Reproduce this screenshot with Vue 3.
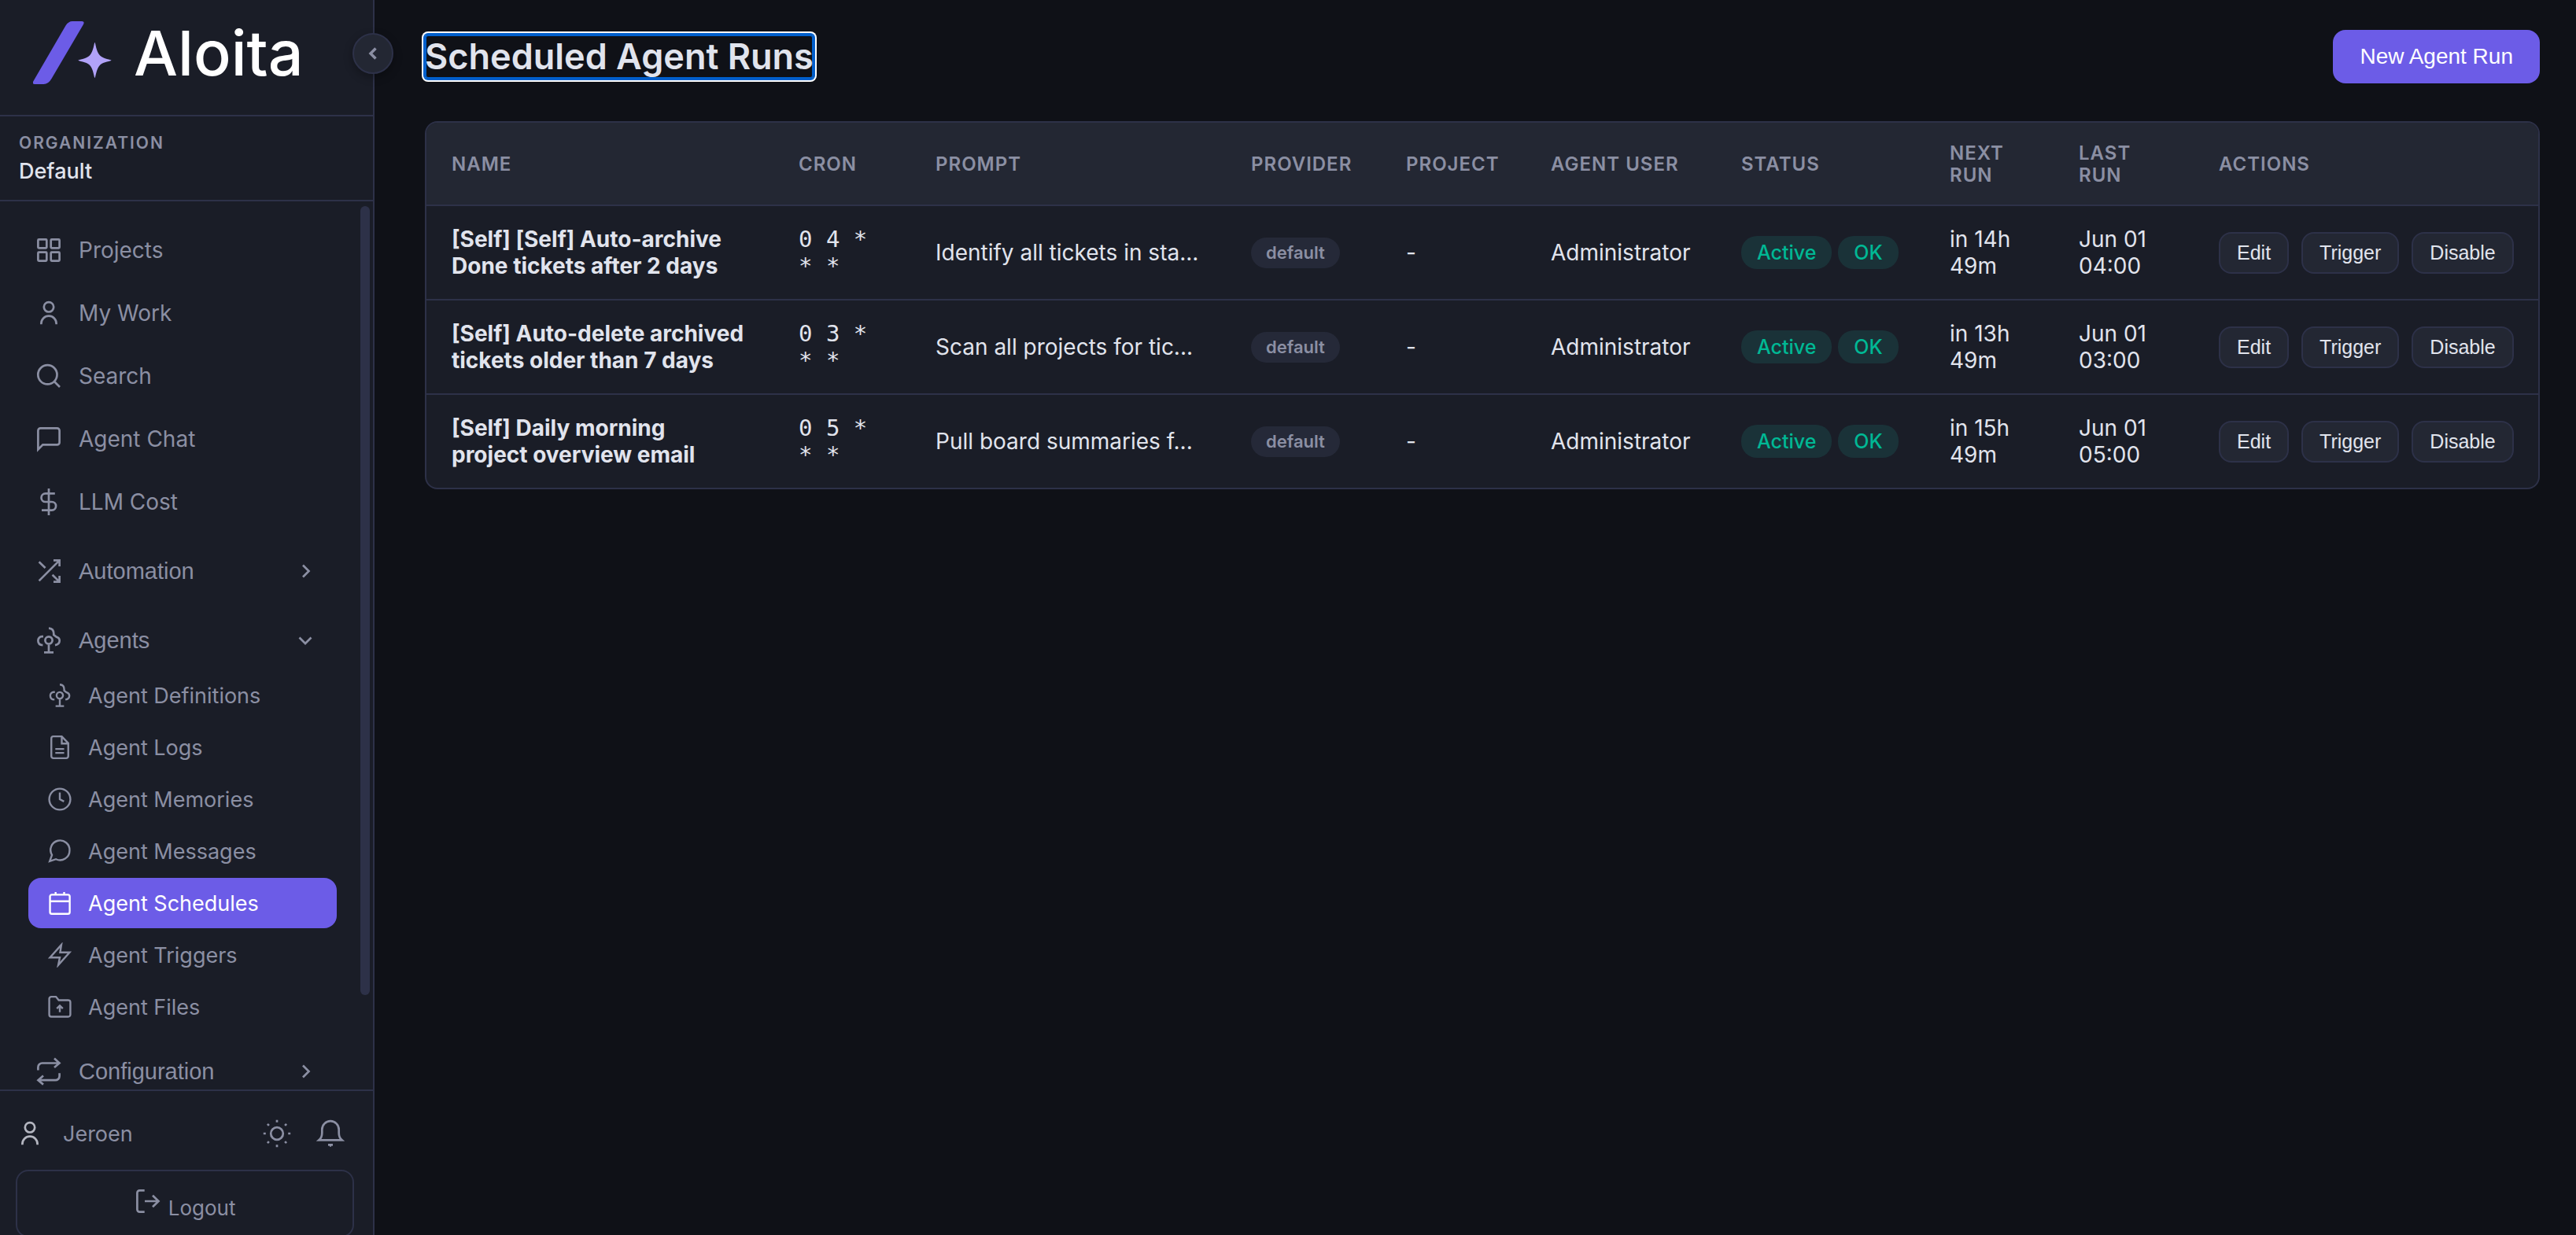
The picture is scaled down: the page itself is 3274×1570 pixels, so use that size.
<template>
  <div class="layout">
    <aside class="sidebar">
      <div class="brand">
        <svg class="brand-mark" viewBox="0 0 100 80" aria-hidden="true">
          <path
            d="M50 0h12q4 0 2 4L23.500 73q-4 7-10 7H2q-3.500 0-1.500-4L41.500 5.500Q45 0 50 0z"
            fill="#6c5ce7"
          />
          <path
            d="M78.500 27c1 0 1.500 11.500 6.500 16.500 4.500 4.500 14.500 5.200 14.500 6.200s-10 1.500-14.500 6C80 61 79.500 72 78.500 72s-1.500-11-6.500-16.300c-4.500-4.500-14.500-5-14.500-6s10-1.700 14.500-6.200C77 38.500 77.500 27 78.500 27z"
            fill="#b1a2f8"
          />
        </svg>
        <span class="brand-name">Aloita</span>
      </div>
      <button class="collapse-btn" aria-label="Collapse sidebar">
        <svg viewBox="0 0 16 20"><path d="M11.5 3.5 5 10l6.5 6.5" /></svg>
      </button>

      <div class="org">
        <span class="org-label">Organization</span>
        <span class="org-name">Default</span>
      </div>

      <div class="nav-wrap">
        <nav class="nav">
          <a v-for="item in mainItems" :key="item.label" href="#" class="nav-item">
            <svg class="icon" viewBox="0 0 36 36"><path :d="icons[item.icon]" /></svg>
            {{ item.label }}
          </a>

          <template v-for="group in groups" :key="group.label">
            <button class="nav-item nav-group" :aria-expanded="group.open">
              <svg class="icon" viewBox="0 0 36 36"><path :d="icons[group.icon]" /></svg>
              <span>{{ group.label }}</span>
              <svg class="chevron" viewBox="0 0 24 24">
                <path :d="group.open ? icons.chevronDown : icons.chevronRight" />
              </svg>
            </button>
            <div v-if="group.open" class="sub-list">
              <a
                v-for="item in group.items"
                :key="item.label"
                href="#"
                class="sub-item"
                :class="{ active: item.label === current }"
              >
                <svg class="icon icon-small" viewBox="0 0 36 36"><path :d="icons[item.icon]" /></svg>
                {{ item.label }}
              </a>
            </div>
          </template>
        </nav>
        <div class="scroll-thumb"></div>
      </div>

      <div class="sidebar-footer">
        <div class="user-row">
          <svg class="icon user-icon" viewBox="0 0 36 36"><path :d="icons.user" /></svg>
          <span class="user-name">Jeroen</span>
          <button class="icon-btn" aria-label="Toggle theme">
            <svg class="icon" viewBox="0 0 36 36"><path :d="icons.sun" /></svg>
          </button>
          <button class="icon-btn" aria-label="Notifications">
            <svg class="icon" viewBox="0 0 36 36"><path :d="icons.bell" /></svg>
          </button>
        </div>
        <button class="logout-btn">
          <svg class="icon" viewBox="0 0 36 36"><path :d="icons.logout" /></svg>
          Logout
        </button>
      </div>
    </aside>

    <main class="main">
      <header class="page-header">
        <h1 tabindex="-1">Scheduled Agent Runs</h1>
        <button class="btn-primary">New Agent Run</button>
      </header>

      <div class="table-card">
        <table>
          <colgroup>
            <col class="col-name" />
            <col class="col-cron" />
            <col class="col-prompt" />
            <col class="col-provider" />
            <col class="col-project" />
            <col class="col-user" />
            <col class="col-status" />
            <col class="col-next" />
            <col class="col-last" />
            <col class="col-actions" />
          </colgroup>
          <thead>
            <tr>
              <th v-for="column in columns" :key="column">{{ column }}</th>
            </tr>
          </thead>
          <tbody>
            <tr v-for="run in runs" :key="run.name">
              <td class="name">{{ run.name }}</td>
              <td class="cron">{{ run.cron }}</td>
              <td class="prompt">{{ run.prompt }}</td>
              <td><span class="badge badge-muted">default</span></td>
              <td>-</td>
              <td>Administrator</td>
              <td>
                <div class="badges">
                  <span class="badge badge-success">Active</span>
                  <span class="badge badge-success">OK</span>
                </div>
              </td>
              <td>{{ run.next }}</td>
              <td>{{ run.last }}</td>
              <td>
                <div class="actions">
                  <button class="btn-small">Edit</button>
                  <button class="btn-small">Trigger</button>
                  <button class="btn-small">Disable</button>
                </div>
              </td>
            </tr>
          </tbody>
        </table>
      </div>
    </main>
  </div>
</template>

<script setup>
import { ref } from 'vue';

const current = ref('Agent Schedules');

const icons = {
  grid: 'M5.4 4.4h8.9a1 1 0 0 1 1 1v8.9a1 1 0 0 1-1 1H5.4a1 1 0 0 1-1-1V5.4a1 1 0 0 1 1-1zM21.7 4.4h8.9a1 1 0 0 1 1 1v8.9a1 1 0 0 1-1 1h-8.9a1 1 0 0 1-1-1V5.4a1 1 0 0 1 1-1zM5.4 20.7h8.9a1 1 0 0 1 1 1v8.9a1 1 0 0 1-1 1H5.4a1 1 0 0 1-1-1v-8.9a1 1 0 0 1 1-1zM21.7 20.7h8.9a1 1 0 0 1 1 1v8.9a1 1 0 0 1-1 1h-8.9a1 1 0 0 1-1-1v-8.9a1 1 0 0 1 1-1z',
  user: 'M11.8 10.3a6.2 6.2 0 1 0 12.4 0a6.2 6.2 0 1 0-12.4 0M8.4 32.2v-1a9.6 9.5 0 0 1 19.2 0v1',
  search: 'M4.3 16.3a12.1 12.1 0 1 0 24.2 0a12.1 12.1 0 1 0-24.2 0M25 25l7 7',
  chat: 'M4.4 31.5V7.4a3 3 0 0 1 3-3h21.2a3 3 0 0 1 3 3v15a3 3 0 0 1-3 3H10.4z',
  dollar: 'M18 1v34M25.8 7.4H13.8a5.3 5.3 0 0 0 0 10.6h8a5.3 5.3 0 0 1 0 10.6H9',
  shuffle: 'M24 4.4h7.6V12M31.6 4.4 5.6 30.4M5.6 6.2l8 7.8M22.6 22.8l9 8.8M31.6 24v7.6H24',
  agents: 'M13.4 18a4.6 4.6 0 1 0 9.2 0a4.6 4.6 0 1 0-9.2 0M18 22.6v10.5M12 33.3h12M11 13.2H9.5a5 5 0 0 0-5.1 5.3c0 3.4 2.3 5.5 6 5.6M18 2.6c4 .2 6.3 3 6.3 7v1.5l3.2 2.5c2.8.8 4.2 2.6 4.2 4.9 0 3-2.2 5-5.7 5.6',
  file: 'M20.8 2.4H8.9a3 3 0 0 0-3 3v25.2a3 3 0 0 0 3 3h18.2a3 3 0 0 0 3-3V12.2zM20.8 2.4v10.2h9.3M11.6 20.4h12.6M11.6 26h12.6',
  clock: 'M2.9 18a15.1 15.1 0 1 0 30.2 0a15.1 15.1 0 1 0-30.2 0M18 8.5V18l6 3.2',
  message: 'M32 17.2a13.6 13.6 0 0 1-19.5 12.3L3.6 32.4 6.8 23.4A13.6 13.6 0 1 1 32 17.2z',
  calendar: 'M6.6 6h23a2.6 2.6 0 0 1 2.6 2.6v22.2a2.6 2.6 0 0 1-2.6 2.6h-23A2.6 2.6 0 0 1 4 30.8V8.6A2.6 2.6 0 0 1 6.6 6zM12 2.2V6M24.2 2.2V6M4 15.4h28.2',
  bolt: 'M20.2 3.5 4 21.6h14L15.8 32.5 32 14.4H18.5z',
  folder: 'M2.9 6.5a3 3 0 0 1 3-3h6.6l4 5h13.6a3 3 0 0 1 3 3v17.6a3 3 0 0 1-3 3H5.9a3 3 0 0 1-3-3zM18 25.5v-9M13.7 20.5l4.3-4.3 4.3 4.3',
  repeat: 'M25 1.6l6.5 5.9-6.5 5.5M31 7.5H9.6a5.2 5.2 0 0 0-5.2 5.2V16.5M11 23.4 4.5 29.2l6.5 5.4M5 29.2h21.4a5.2 5.2 0 0 0 5.2-5.2V20.2',
  sun: 'M10.2 18a7.8 7.8 0 1 0 15.6 0a7.8 7.8 0 1 0-15.6 0M18 .8v3M18 32.2v3M.8 18h3M32.2 18h3M5.9 5.9l2 2M28.1 28.1l2 2M5.9 30.1l2-2M28.1 7.9l2-2',
  bell: 'M3.4 26.4h29.2c-2.6-2.2-3.9-5-3.9-9.2v-4.3a10.7 10.7 0 0 0-21.4 0v4.3c0 4.2-1.3 7-3.9 9.2zM15 32.3h6M17 33.5h2',
  logout: 'M13.7 4.4H7.4a3 3 0 0 0-3 3v21.2a3 3 0 0 0 3 3h6.3M14 18h17.5M24 10.8l7.5 7.2-7.5 7.2',
  chevronRight: 'M9 4.5l7.5 7.5L9 19.5',
  chevronDown: 'M4.5 8.5l7.5 7.5 7.5-7.5'
};

const mainItems = [
  { label: 'Projects', icon: 'grid' },
  { label: 'My Work', icon: 'user' },
  { label: 'Search', icon: 'search' },
  { label: 'Agent Chat', icon: 'chat' },
  { label: 'LLM Cost', icon: 'dollar' }
];

const groups = [
  { label: 'Automation', icon: 'shuffle', open: false },
  {
    label: 'Agents',
    icon: 'agents',
    open: true,
    items: [
      { label: 'Agent Definitions', icon: 'agents' },
      { label: 'Agent Logs', icon: 'file' },
      { label: 'Agent Memories', icon: 'clock' },
      { label: 'Agent Messages', icon: 'message' },
      { label: 'Agent Schedules', icon: 'calendar' },
      { label: 'Agent Triggers', icon: 'bolt' },
      { label: 'Agent Files', icon: 'folder' }
    ]
  },
  { label: 'Configuration', icon: 'repeat', open: false }
];

const columns = [
  'Name', 'Cron', 'Prompt', 'Provider', 'Project',
  'Agent User', 'Status', 'Next Run', 'Last Run', 'Actions'
];

const runs = [
  {
    name: '[Self] [Self] Auto-archive Done tickets after 2 days',
    cron: '0 4 * * *',
    prompt: 'Identify all tickets in sta...',
    next: 'in 14h 49m',
    last: 'Jun 01 04:00'
  },
  {
    name: '[Self] Auto-delete archived tickets older than 7 days',
    cron: '0 3 * * *',
    prompt: 'Scan all projects for tic...',
    next: 'in 13h 49m',
    last: 'Jun 01 03:00'
  },
  {
    name: '[Self] Daily morning project overview email',
    cron: '0 5 * * *',
    prompt: 'Pull board summaries f...',
    next: 'in 15h 49m',
    last: 'Jun 01 05:00'
  }
];
</script>

<style>
body {
  margin: 0;
  background-color: #0f1117;
}
</style>

<style scoped>
.layout {
  display: flex;
  height: 100vh;
  overflow: hidden;
  background-color: #0f1117;
  color: #e1e4ed;
  font-family: Inter, "Liberation Sans", sans-serif;
  font-size: 28px;
}

.layout *,
.layout {
  box-sizing: border-box;
}

button {
  font-family: "Liberation Sans", Arial, sans-serif;
  cursor: pointer;
}

svg {
  flex-shrink: 0;
  fill: none;
  stroke: currentColor;
  stroke-width: 2.7;
}

/* Sidebar */
.sidebar {
  position: relative;
  display: flex;
  flex-direction: column;
  flex-shrink: 0;
  width: 476px;
  background-color: #1a1d27;
  border-right: 2px solid #2d3148;
  color: #8b8fa3;
}

.brand {
  display: flex;
  align-items: center;
  gap: 28px;
  height: 148px;
  padding: 0 42px 12px;
  border-bottom: 2px solid #2d3148;
}

.brand-mark {
  width: 100px;
  height: 80px;
  stroke: none;
}

.brand-name {
  color: #fff;
  font-size: 79px;
  font-weight: 500;
  line-height: 80px;
}

.collapse-btn {
  position: absolute;
  top: 42px;
  right: -26px;
  z-index: 2;
  display: flex;
  align-items: center;
  justify-content: center;
  width: 52px;
  height: 52px;
  padding: 0;
  border: 2px solid #2d3148;
  border-radius: 50%;
  background-color: #232733;
  color: #8b8fa3;
  box-shadow: 0 4px 12px rgba(0, 0, 0, 0.3);
}

.collapse-btn svg {
  width: 16px;
  height: 20px;
  stroke-width: 3.5;
}

.org {
  display: flex;
  flex-direction: column;
  gap: 4px;
  height: 108px;
  padding: 20px 24px 0;
  border-bottom: 2px solid #2d3148;
}

.org-label {
  font-size: 21px;
  font-weight: 600;
  line-height: 28px;
  letter-spacing: 2px;
  text-transform: uppercase;
}

.org-name {
  color: #e1e4ed;
  font-size: 27px;
  font-weight: 500;
  line-height: 36px;
}

.nav-wrap {
  position: relative;
  flex: 1;
  min-height: 0;
}

.nav {
  display: flex;
  flex-direction: column;
  gap: 4px;
  height: 100%;
  padding: 24px 34px 0 24px;
  overflow: hidden;
}

.nav-item {
  display: flex;
  align-items: center;
  flex-shrink: 0;
  gap: 20px;
  height: 76px;
  padding: 0 20px;
  border-radius: 16px;
  color: #8b8fa3;
  text-decoration: none;
}

.nav-group {
  margin-top: 8px;
  padding-right: 40px;
  border: none;
  background: none;
  font-size: 29px;
  text-align: left;
}

.nav-group span {
  flex: 1;
}

.icon {
  width: 36px;
  height: 36px;
}

.icon-small {
  width: 32px;
  height: 32px;
}

.chevron {
  width: 24px;
  height: 24px;
}

.sub-list {
  display: flex;
  flex-direction: column;
  flex-shrink: 0;
  gap: 2px;
  margin-top: -4px;
  padding: 0 12px;
}

.sub-item {
  display: flex;
  align-items: center;
  gap: 20px;
  height: 64px;
  padding: 0 24px;
  border-radius: 16px;
  color: #8b8fa3;
  font-size: 27px;
  text-decoration: none;
}

.sub-item.active {
  background-color: #6c5ce7;
  color: #fff;
}

.scroll-thumb {
  position: absolute;
  top: 6px;
  right: 4px;
  bottom: 120px;
  width: 12px;
  border-radius: 6px;
  background-color: #2d3148;
}

.sidebar-footer {
  flex-shrink: 0;
  height: 185px;
  padding: 28px 24px 0 20px;
  border-top: 2px solid #2d3148;
}

.user-row {
  display: flex;
  align-items: center;
  gap: 8px;
  height: 52px;
  margin-bottom: 20px;
}

.user-icon {
  color: #b4b6c0;
}

.user-name {
  flex: 1;
  margin-left: 16px;
  font-size: 27px;
}

.icon-btn {
  display: flex;
  align-items: center;
  justify-content: center;
  width: 60px;
  height: 52px;
  padding: 0;
  border: none;
  background: none;
  color: #8b8fa3;
}

.logout-btn {
  width: 100%;
  height: 86px;
  border: 2px solid #2d3148;
  border-radius: 16px;
  background: none;
  color: #8b8fa3;
  font-family: inherit;
  font-size: 26px;
}

/* Main area */
.main {
  flex: 1;
  min-width: 0;
  padding: 38px 46px 0 64px;
}

.page-header {
  display: flex;
  align-items: center;
  justify-content: space-between;
  margin-bottom: 48px;
}

h1 {
  margin: 0;
  border-radius: 4px;
  outline: none;
  box-shadow: inset 0 0 0 2px #005fcc, 0 0 0 2px #005fcc, 0 0 0 4px #fff;
  font-size: 45px;
  font-weight: 600;
  line-height: 56px;
}

.btn-primary {
  height: 68px;
  padding: 0 34px;
  border: none;
  border-radius: 16px;
  background-color: #6c5ce7;
  color: #fff;
  font-size: 28px;
}

.table-card {
  overflow: hidden;
  border: 2px solid #2d3148;
  border-radius: 16px;
  background-color: #1a1d27;
}

table {
  width: 100%;
  border-collapse: separate;
  border-spacing: 0;
  table-layout: fixed;
}

.col-name { width: 441px; }
.col-cron { width: 174px; }
.col-prompt { width: 401px; }
.col-provider { width: 197px; }
.col-project { width: 184px; }
.col-user { width: 242px; }
.col-status { width: 265px; }
.col-next { width: 164px; }
.col-last { width: 178px; }
.col-actions { width: 438px; }

th,
td {
  padding: 0 32px;
  border-bottom: 2px solid #2d3148;
  text-align: left;
  vertical-align: middle;
}

th {
  height: 106px;
  padding-top: 2px;
  background-color: #232733;
  color: #8b8fa3;
  font-size: 24px;
  font-weight: 600;
  line-height: 28px;
  letter-spacing: 1px;
  text-transform: uppercase;
}

td {
  height: 120px;
  font-size: 28px;
  line-height: 34px;
}

tbody tr:last-child td {
  height: 118px;
  border-bottom: none;
}

.name {
  font-weight: 700;
  text-wrap: balance;
}

.cron {
  font-family: "DejaVu Sans Mono", "Liberation Mono", monospace;
  font-size: 29px;
}

.prompt {
  white-space: nowrap;
}

.badges {
  display: flex;
  gap: 8px;
}

.badge {
  display: inline-block;
  padding: 4px 20px;
  border-radius: 20px;
  white-space: nowrap;
}

.badge-muted {
  padding: 5px 19px;
  background-color: #252938;
  color: #8b8fa3;
  font-size: 22px;
  font-weight: 600;
  line-height: 29px;
}

.badge-success {
  background-color: #1a3238;
  color: #00b894;
  font-size: 25px;
  font-weight: 500;
}

.actions {
  display: flex;
  gap: 16px;
}

.btn-small {
  height: 53px;
  padding: 0 21px;
  border: 2px solid #2d3148;
  border-radius: 16px;
  background-color: #232733;
  color: #e1e4ed;
  font-size: 25px;
}
</style>
